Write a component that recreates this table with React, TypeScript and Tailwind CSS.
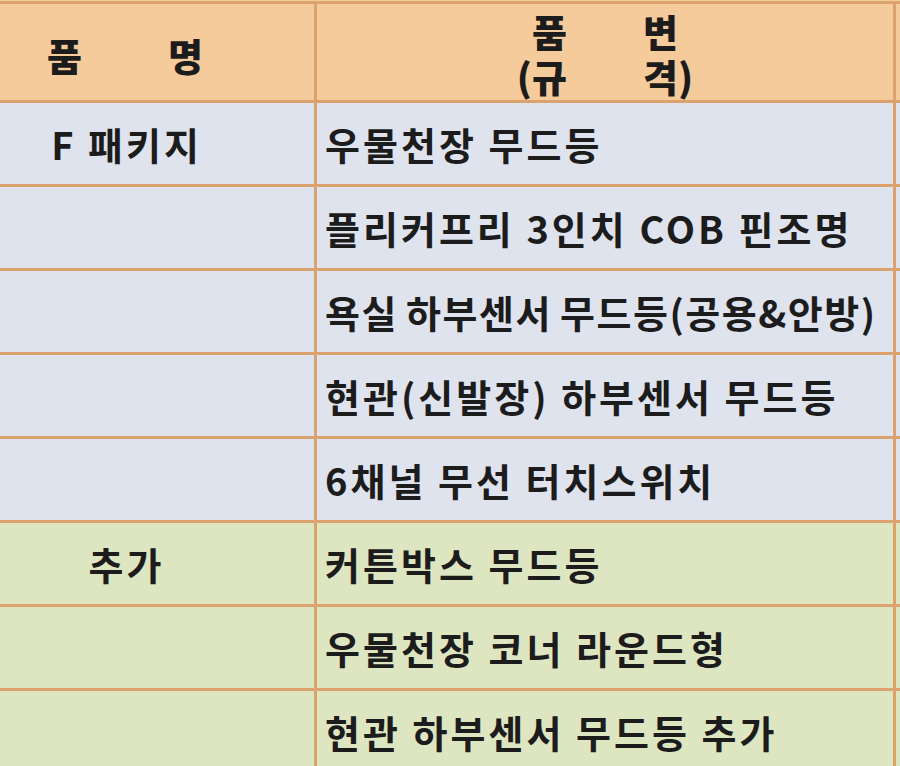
const packageRows = [
  { name: 'F 패키지', spec: '우물천장 무드등' },
  { name: '', spec: '플리커프리 3인치 COB 핀조명' },
  { name: '', spec: '욕실 하부센서 무드등(공용&안방)', tight: true },
  { name: '', spec: '현관(신발장) 하부센서 무드등' },
  { name: '', spec: '6채널 무선 터치스위치' },
];

const extraRows = [
  { name: '추가', spec: '커튼박스 무드등' },
  { name: '', spec: '우물천장 코너 라운드형' },
  { name: '', spec: '현관 하부센서 무드등 추가' },
];

function Row({ name, spec, tone, tight }: { name: string; spec: string; tone: string; tight?: boolean }) {
  return (
    <div className={`flex h-[84px] border-b-[3px] border-[#dca26d] ${tone}`}>
      <div className="w-[381px] shrink-0 border-r-[3px] border-[#dca26d] flex items-center justify-center tracking-[3px] pl-[3px]">
        {name}
      </div>
      <div
        className={`w-[579px] shrink-0 border-r-[3px] border-[#dca26d] flex items-center pl-[8px] whitespace-nowrap ${
          tight ? 'tracking-[1.5px] [word-spacing:-2px]' : 'tracking-[3px]'
        }`}
      >
        {spec}
      </div>
      <div className="flex-1" />
    </div>
  );
}

export default function App() {
  return (
    <div className="h-[766px] w-[900px] overflow-hidden bg-[#f6cb9c] pt-px">
      <div className="-ml-[64px] w-[1000px] border-t-[3px] border-[#dca26d] font-['Noto_Sans_CJK_KR',sans-serif] font-bold text-[38px] text-[#1c1c1c]">
        {/* header */}
        <div className="flex h-[99px] border-b-[3px] border-[#dca26d] bg-[#f6cb9c] font-black">
          <div className="w-[381px] shrink-0 border-r-[3px] border-[#dca26d] flex items-center justify-center gap-[86px] pt-[4px]">
            <span>품</span>
            <span>명</span>
          </div>
          <div className="w-[579px] shrink-0 border-r-[3px] border-[#dca26d] flex items-center justify-center">
            <div className="grid grid-cols-[auto_auto] gap-x-[76px] leading-[45px] pt-[2px]">
              <span className="text-right">품</span>
              <span>변</span>
              <span className="text-right">(규</span>
              <span>격)</span>
            </div>
          </div>
          <div className="flex-1" />
        </div>

        {packageRows.map((r, i) => (
          <Row key={'p' + i} name={r.name} spec={r.spec} tight={r.tight} tone="bg-[#dee3ee]" />
        ))}
        {extraRows.map((r, i) => (
          <Row key={'e' + i} name={r.name} spec={r.spec} tone="bg-[#dee5c1]" />
        ))}
      </div>
    </div>
  );
}
